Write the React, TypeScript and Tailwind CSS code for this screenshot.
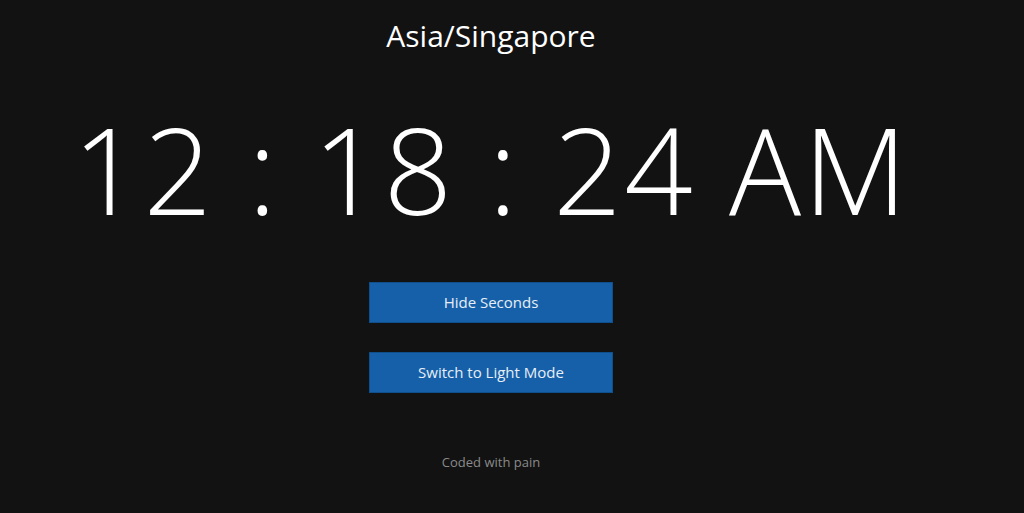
export default function App() {
  return (
    <div className="min-h-screen bg-[#121212] flex flex-col items-center pr-[42px] text-white font-['Open_Sans',sans-serif]">
      <h1 className="mt-[15px] text-[30px] leading-[42px] font-normal">Asia/Singapore</h1>
      <div className="mt-[30px] text-[120px] leading-[163px] font-light tracking-[2.5px] whitespace-nowrap">
        12 : 18 : 24 AM
      </div>
      <div className="mt-[32px] flex flex-col items-center gap-[29px]">
        <button className="w-[244px] h-[41px] bg-[#1560a8] border border-[#0f4f8c] text-[15px] text-[#e8eef6]">
          Hide Seconds
        </button>
        <button className="w-[244px] h-[41px] bg-[#1560a8] border border-[#0f4f8c] text-[15px] text-[#e8eef6]">
          Switch to Light Mode
        </button>
      </div>
      <p className="mt-[60px] text-[13px] text-[#8a8a8a]">Coded with pain</p>
    </div>
  );
}
